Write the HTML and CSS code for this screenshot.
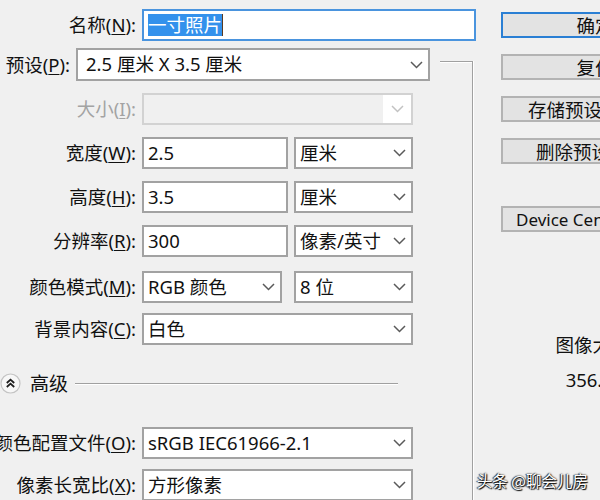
FILE: index.html
```html
<!DOCTYPE html>
<html lang="zh-CN">
<head>
<meta charset="utf-8">
<title>新建</title>
<link rel="stylesheet" href="styles.css">
</head>
<body>
<div class="dialog">
  <div class="main">
    <div class="row row-name">
      <span class="lbl"><span>名称(<u>N</u>):</span></span>
      <div class="ctl name-input"><span class="sel">一寸照片</span><span class="caret"></span></div>
    </div>
    <div class="group">
      <div class="preset-row">
        <span class="lbl lbl-preset"><span>预设(<u>P</u>):</span></span>
        <div class="ctl select w-preset"><span>2.5 厘米 X 3.5 厘米</span><svg class="chev" width="13" height="8" viewBox="0 0 13 8"><polyline points="1,1 6.5,6.5 12,1"/></svg></div>
      </div>
      <div class="fields">
        <div class="row">
          <span class="lbl lbl-disabled"><span>大小(<u>I</u>):</span></span>
          <div class="ctl select w-full ctl-disabled"><span></span><span class="dis-btn"><svg class="chev" width="13" height="8" viewBox="0 0 13 8"><polyline points="1,1 6.5,6.5 12,1"/></svg></span></div>
        </div>
        <div class="row">
          <span class="lbl"><span>宽度(<u>W</u>):</span></span>
          <div class="pair">
            <div class="ctl w-num">2.5</div>
            <div class="ctl select w-unit"><span>厘米</span><svg class="chev" width="13" height="8" viewBox="0 0 13 8"><polyline points="1,1 6.5,6.5 12,1"/></svg></div>
          </div>
        </div>
        <div class="row">
          <span class="lbl"><span>高度(<u>H</u>):</span></span>
          <div class="pair">
            <div class="ctl w-num">3.5</div>
            <div class="ctl select w-unit"><span>厘米</span><svg class="chev" width="13" height="8" viewBox="0 0 13 8"><polyline points="1,1 6.5,6.5 12,1"/></svg></div>
          </div>
        </div>
        <div class="row">
          <span class="lbl"><span>分辨率(<u>R</u>):</span></span>
          <div class="pair">
            <div class="ctl w-num">300</div>
            <div class="ctl select w-unit"><span>像素/英寸</span><svg class="chev" width="13" height="8" viewBox="0 0 13 8"><polyline points="1,1 6.5,6.5 12,1"/></svg></div>
          </div>
        </div>
        <div class="row row-mode">
          <span class="lbl"><span>颜色模式(<u>M</u>):</span></span>
          <div class="pair">
            <div class="ctl select w-mode"><span>RGB 颜色</span><svg class="chev" width="13" height="8" viewBox="0 0 13 8"><polyline points="1,1 6.5,6.5 12,1"/></svg></div>
            <div class="ctl select w-unit"><span>8 位</span><svg class="chev" width="13" height="8" viewBox="0 0 13 8"><polyline points="1,1 6.5,6.5 12,1"/></svg></div>
          </div>
        </div>
        <div class="row row-bg">
          <span class="lbl"><span>背景内容(<u>C</u>):</span></span>
          <div class="ctl select w-full"><span>白色</span><svg class="chev" width="13" height="8" viewBox="0 0 13 8"><polyline points="1,1 6.5,6.5 12,1"/></svg></div>
        </div>
      </div>
      <div class="adv">
        <svg class="adv-icon" width="21" height="21" viewBox="0 0 21 21"><circle cx="10.5" cy="10.5" r="9.5" class="adv-circle"/><polyline points="6.8,10 10.5,6.6 14.2,10" class="adv-chev"/><polyline points="6.8,14 10.5,10.6 14.2,14" class="adv-chev"/></svg>
        <span class="adv-text">高级</span>
        <span class="adv-line"></span>
      </div>
      <div class="fields fields-adv">
        <div class="row">
          <span class="lbl"><span>颜色配置文件(<u>O</u>):</span></span>
          <div class="ctl select w-full"><span>sRGB IEC61966-2.1</span><svg class="chev" width="13" height="8" viewBox="0 0 13 8"><polyline points="1,1 6.5,6.5 12,1"/></svg></div>
        </div>
        <div class="row">
          <span class="lbl"><span>像素长宽比(<u>X</u>):</span></span>
          <div class="ctl select w-full"><span>方形像素</span><svg class="chev" width="13" height="8" viewBox="0 0 13 8"><polyline points="1,1 6.5,6.5 12,1"/></svg></div>
        </div>
      </div>
    </div>
  </div>
  <div class="side">
    <div class="btn btn-default">确定</div>
    <div class="btn">复位</div>
    <div class="btn btn-left btn-save">存储预设(S)...</div>
    <div class="btn btn-left btn-del">删除预设(D)</div>
    <div class="btn btn-left btn-dc">Device Central...</div>
    <div class="info">
      <div class="info-label">图像大小:</div>
      <div class="info-value">356.3K</div>
    </div>
  </div>
</div>
<div class="watermark">头条 @聊会儿房</div>
</body>
</html>
```
FILE: styles.css
```css
html, body {
  margin: 0;
  padding: 0;
  overflow: hidden;
  width: 600px;
  height: 500px;
  background: #f0f0f0;
}

body {
  font-family: "Noto Sans", "Noto Sans CJK SC", sans-serif;
  font-size: 18.5px;
  color: #111;
  position: relative;
}

.dialog {
  display: flex;
  width: 720px;
}

.main {
  width: 480px;
  flex: none;
}

.row {
  display: flex;
  align-items: center;
  gap: 6px;
  height: 32px;
}

.row-name {
  margin-top: 9px;
}

.lbl {
  width: 136px;
  flex: none;
  display: flex;
  justify-content: flex-end;
  white-space: nowrap;
  line-height: 32px;
}

.lbl u {
  text-underline-offset: 2px;
  text-decoration-thickness: 1px;
}

.lbl-disabled {
  color: #a3a3a3;
}

.ctl {
  box-sizing: border-box;
  height: 32px;
  border: 2px solid #a2a2a2;
  background: #fff;
  display: flex;
  align-items: center;
  padding: 0 4px;
  white-space: nowrap;
  line-height: 1;
}

.select {
  justify-content: space-between;
  padding-right: 5px;
}

.chev {
  flex: none;
}

.chev polyline {
  fill: none;
  stroke: #5a5a5a;
  stroke-width: 1.5;
}

.name-input {
  width: 334px;
  border-color: #4a94de;
}

.sel {
  background: #3391ec;
  color: #fff;
  height: 22px;
  line-height: 22px;
}

.caret {
  width: 1px;
  height: 22px;
  background: #5a3a20;
}

.group {
  box-sizing: border-box;
  width: 473px;
  height: 520px;
  margin-top: 20px;
  border-top: 1px solid #a0a0a0;
  border-right: 1px solid #a0a0a0;
  box-shadow: inset 0 1px 0 #fff, 1px 0 0 #fff;
}

.preset-row {
  display: flex;
  align-items: center;
  gap: 6px;
  width: 440px;
  height: 33px;
  margin-top: -14px;
  background: #f0f0f0;
}

.lbl-preset {
  width: 70px;
  line-height: 33px;
}

.w-preset {
  width: 354px;
  height: 33px;
  padding-left: 8px;
}

.fields {
  display: flex;
  flex-direction: column;
  gap: 12px;
  margin-top: 12px;
}

.row-mode {
  margin-top: 2px;
}

.row-bg {
  margin-top: -2px;
}

.fields-adv {
  margin-top: 28px;
  gap: 10px;
}

.pair {
  display: flex;
  justify-content: space-between;
  width: 271px;
}

.w-full {
  width: 271px;
}

.w-num {
  width: 146px;
}

.w-unit {
  width: 119px;
}

.w-mode {
  width: 140px;
}

.ctl-disabled {
  background: #f0f0f0;
  border-color: #d2d2d2;
  padding-right: 0;
}

.dis-btn {
  width: 28px;
  height: 28px;
  background: #fff;
  display: flex;
  align-items: center;
  justify-content: center;
}

.ctl-disabled .chev polyline {
  stroke: #c2c2c2;
}

.adv {
  display: flex;
  align-items: center;
  width: 398px;
  height: 32px;
  margin-top: 22px;
}

.adv-icon {
  flex: none;
}

.adv-circle {
  fill: #f7f7f7;
  stroke: #c4c4c4;
  stroke-width: 1.2;
}

.adv-chev {
  fill: none;
  stroke: #1e1e1e;
  stroke-width: 1.8;
}

.adv-text {
  margin-left: 9px;
  white-space: nowrap;
  font-size: 19px;
}

.adv-line {
  flex: 1;
  height: 1px;
  margin-left: 7px;
  background: #a0a0a0;
  box-shadow: 0 1px 0 #fff;
}

.side {
  width: 188px;
  flex: none;
  margin-left: 21px;
  padding-top: 12px;
  display: flex;
  flex-direction: column;
  gap: 16px;
}

.btn {
  box-sizing: border-box;
  height: 26px;
  border: 2px solid #b3b3b3;
  background: #e3e3e3;
  display: flex;
  align-items: center;
  justify-content: center;
  white-space: nowrap;
  font-size: 18.5px;
  color: #111;
}

.btn-default {
  border-color: #2a7fd4;
}

.btn-left {
  justify-content: flex-start;
}

.btn-save {
  padding-left: 25px;
}

.btn-del {
  padding-left: 33px;
}

.btn-dc {
  margin-top: 26px;
  padding-left: 13px;
  font-size: 17px;
}

.info {
  margin-top: 84px;
  text-align: center;
  line-height: 26px;
}

.info-label {
  padding-left: 0;
}

.info-value {
  margin-top: 9px;
}

.watermark {
  position: absolute;
  right: 12px;
  bottom: 9px;
  font-family: "Noto Sans CJK SC", sans-serif;
  font-size: 15.5px;
  color: #fff;
  white-space: nowrap;
  text-shadow: 0 0 2px #000, 1px 1px 1px #000, -1px 0 1px #333;
}
```
